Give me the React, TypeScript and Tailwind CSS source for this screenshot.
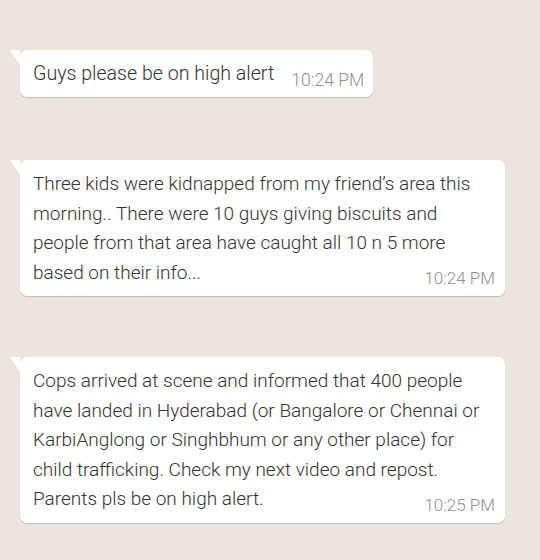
import React from "react";

function Tail() {
  return (
    <svg className="absolute -left-[10px] top-0" width="10" height="15" viewBox="0 0 10 15">
      <polygon points="0,0 10,0 10,15" fill="#ffffff" />
    </svg>
  );
}

export default function App() {
  const font = { fontFamily: "Roboto, 'Noto Sans', sans-serif" };
  return (
    <div className="w-[540px] h-[560px] bg-[#ece5dd] pt-[50px] pl-[20px] overflow-hidden" style={font}>
      <div className="relative inline-flex items-end gap-[17px] bg-white rounded-[7px] shadow-[0_1px_1px_rgba(0,0,0,0.18)] pl-[13px] pr-[9px] py-[9px]">
        <Tail />
        <span className="text-[19.6px] font-light leading-[29px] text-[#333333]">Guys please be on high alert</span>
        <span className="text-[17.6px] leading-[20px] font-light text-[#8f8f8f] whitespace-nowrap translate-y-[2px]">10:24 PM</span>
      </div>

      <div className="relative mt-[63px] w-[485px] bg-white rounded-[7px] shadow-[0_1px_1px_rgba(0,0,0,0.18)] pl-[13px] pr-[10px] py-[9px] text-[19px] font-light leading-[29.5px] text-[#333333]">
        <Tail />
        <div>Three kids were kidnapped from my friend’s area this</div>
        <div>morning.. There were 10 guys giving biscuits and</div>
        <div>people from that area have caught all 10 n 5 more</div>
        <div className="flex items-end justify-between">
          <span>based on their info...</span>
          <span className="text-[17px] leading-[20px] font-light text-[#8f8f8f] whitespace-nowrap translate-y-[1px]">10:24 PM</span>
        </div>
      </div>

      <div className="relative mt-[61px] w-[485px] bg-white rounded-[7px] shadow-[0_1px_1px_rgba(0,0,0,0.18)] pl-[13px] pr-[10px] py-[9px] text-[19px] font-light leading-[29.5px] text-[#333333]">
        <Tail />
        <div>Cops arrived at scene and informed that 400 people</div>
        <div>have landed in Hyderabad (or Bangalore or Chennai or</div>
        <div>KarbiAnglong or Singhbhum or any other place) for</div>
        <div>child trafficking. Check my next video and repost.</div>
        <div className="flex items-end justify-between">
          <span>Parents pls be on high alert.</span>
          <span className="text-[17px] leading-[20px] font-light text-[#8f8f8f] whitespace-nowrap translate-y-[1px]">10:25 PM</span>
        </div>
      </div>
    </div>
  );
}
